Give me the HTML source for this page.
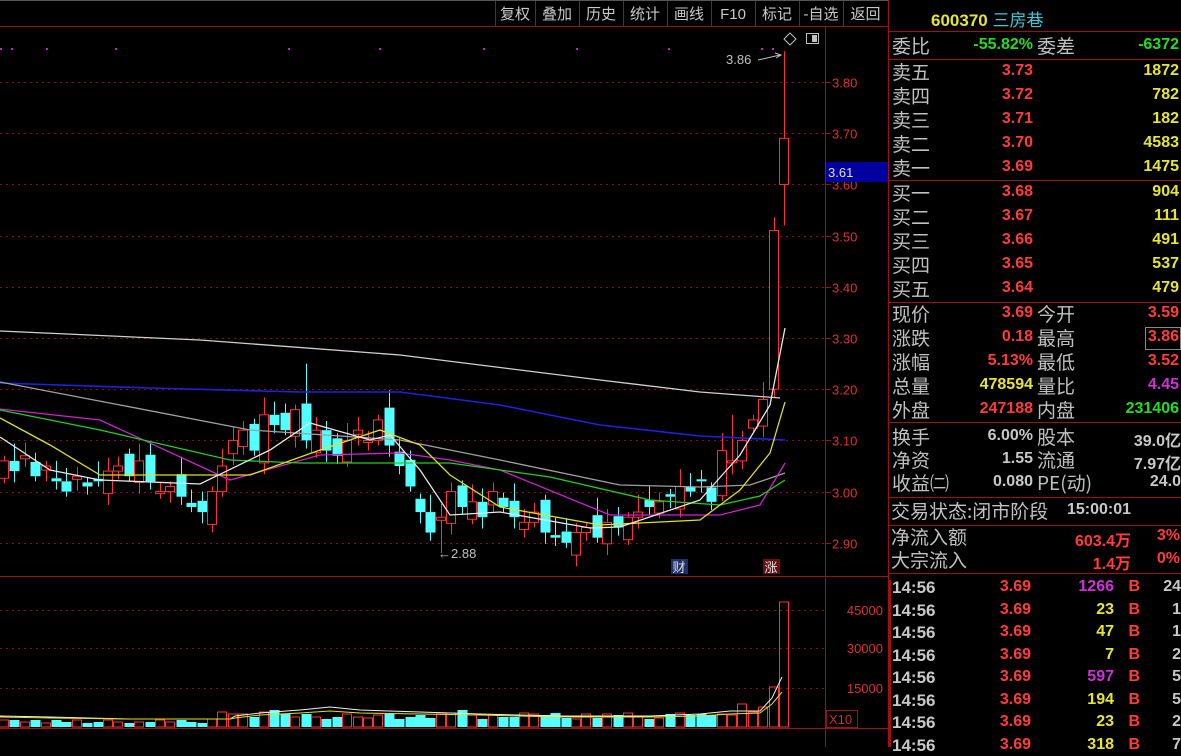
<!DOCTYPE html>
<html><head><meta charset="utf-8">
<style>
body{margin:0;background:#000;width:1181px;height:747px;overflow:hidden;position:relative;font-family:"Liberation Sans","Noto Sans CJK SC",sans-serif;}
.t{position:absolute;white-space:nowrap;}
.lb{font-size:19px;color:#c0c0c0;font-family:"Noto Sans CJK SC","WenQuanYi Zen Hei",sans-serif;}
.n{font-size:16px;font-weight:bold;text-align:right;}
.r{color:#ff3b3b}.y{color:#e6e62e}.g{color:#22dd22}.w{color:#c8c8c8}.m{color:#d030d8}.c{color:#40d0e0}
.hl{position:absolute;left:888px;width:293px;height:1px;background:#a01010;}
</style></head><body>
<svg id="s" width="1181" height="747" style="position:absolute;left:0;top:0"></svg>
<div class="t" style="left:931px;top:6px;font-size:17px;font-weight:bold;color:#e6e62e">600370 <span style="color:#40c8d8;font-weight:normal;font-family:'Noto Sans CJK SC',sans-serif">三房巷</span></div>
<div id="p"></div>
<script>
var S='',NS=document.getElementById('s');
function L(x1,y1,x2,y2,c,d){S+='<line x1="'+x1+'" y1="'+y1+'" x2="'+x2+'" y2="'+y2+'" stroke="'+c+'" stroke-width="1"'+(d?' stroke-dasharray="'+d+'"':'')+'/>';}
function R(x,y,w,h,f,st){S+='<rect x="'+x+'" y="'+y+'" width="'+w+'" height="'+h+'" fill="'+f+'"'+(st?' stroke="'+st+'"':'')+'/>';}
function T(x,y,s,c,fs,a){S+='<text x="'+x+'" y="'+y+'" fill="'+c+'" font-size="'+(fs||13)+'" font-family="Liberation Sans,Noto Sans CJK SC,sans-serif"'+(a?' text-anchor="'+a+'"':'')+'>'+s+'</text>';}
L(0,0.5,888,0.5,'#555');
var bx=[495,535,579,623,667,711,755,799,843,888],bt=['复权','叠加','历史','统计','画线','F10','标记','-自选','返回'];
for(var i=0;i<bx.length;i++){L(bx[i]+.5,1,bx[i]+.5,26,'#a01010');}
for(i=0;i<bt.length;i++)T((bx[i]+bx[i+1])/2,19,bt[i],'#c8c8c8',15,'middle');
L(0,26.5,888,26.5,'#a01010');
L(825.5,26,825.5,747,'#a01010');L(888.5,0,888.5,747,'#a01010');
L(0,576.5,888,576.5,'#a01010');L(0,728.5,888,728.5,'#a01010');
function py(p){return 82+(3.80-p)*512;}
var gl=[3.8,3.7,3.6,3.5,3.4,3.3,3.2,3.1,3.0,2.9];
gl.forEach(function(p){var y=Math.round(py(p))+.5;L(0,y,825,y,'#8a1010','2,4');L(825,y,831,y,'#a01010');T(832,y+5,p.toFixed(2),'#e03030',13);});
[[610,'45000'],[648,'30000'],[688,'15000']].forEach(function(a){L(0,a[0]+.5,825,a[0]+.5,'#8a1010','2,4');T(883,a[0]+5,a[1],'#e03030',13,'end');});
[0,11,46,115,288,379,483,576,668,761,772].forEach(function(x){R(x,48,2,2,'#d020d0');});
var cl=[3.06,3.04,3.07,3.03,3.05,3.02,3.00,3.03,3.01,3.02,3.04,3.05,3.03,3.06,3.02,3.00,3.01,2.99,2.97,2.96,3.00,3.05,3.10,3.12,3.08,3.15,3.13,3.12,3.16,3.10,3.12,3.08,3.07,3.10,3.12,3.10,3.14,3.09,3.05,3.01,2.96,2.92,2.95,3.00,2.97,2.98,2.95,3.00,2.97,2.95,2.94,2.96,2.92,2.91,2.90,2.92,2.93,2.91,2.94,2.93,2.95,2.96,2.97,2.98,2.99,3.01,3.00,3.02,2.98,3.08,3.06,3.10,3.14,3.18,3.51,3.69];
var vol=[7,7,5,7,4,7,5,7,4,5,7,5,4,5,5,7,5,7,5,4,8,15,13,13,10,15,17,13,10,13,10,8,10,13,10,9,12,13,8,10,12,9,13,14,17,12,8,12,10,10,14,13,12,14,9,8,13,9,13,12,14,10,8,9,13,14,12,13,12,13,12,23,15,20,40,125];
for(i=0;i<cl.length;i++){
 var x=Math.round(4+i*10.4),c=cl[i],o;
 if(i==74)o=3.20;else if(i==75)o=3.60;else o=(i?cl[i-1]:3.05)+((i*7%5)-2)*0.012;
 if(Math.abs(o-c)<0.004)o=c+0.005;
 var up=c>o,hi=Math.max(o,c)+0.01+((i*3)%4)*0.008,lo=Math.min(o,c)-0.01-((i*5)%3)*0.006;
 if(i==75){hi=3.86;lo=3.52;} if(i==42)lo=2.88; if(i==29)hi=3.25; if(i==70)hi=3.15;
 var col=up?'#ff3232':'#54ffff',yt=py(Math.max(o,c)),yb=py(Math.min(o,c));
 L(x+.5,py(hi),x+.5,yt,col);L(x+.5,yb,x+.5,py(lo),col);
 if(up)R(x-4.5,yt,9,Math.max(yb-yt,1),'#000',col);else R(x-4.5,yt,10,Math.max(yb-yt,1),col);
 var vh=vol[i];if(up)R(x-4.5,727-vh,9,vh,'none',col);else R(x-4.5,727-vh,10,vh,col);
}
function P(pts,c,w){S+='<polyline fill="none" stroke="'+c+'" stroke-width="'+(w||1.3)+'" points="'+pts+'"/>';}
P('0,331 200,340 400,355 600,380 700,392 780,398','#d0d0d0');
P('0,383 150,388 300,392 400,392 500,405 600,425 700,436 785,440','#2020e0',1.6);
P('0,382 120,405 250,430 400,440 500,460 620,485 700,487 750,485 785,473','#a0a0a0');
P('0,409 100,420 230,480 320,455 400,453 450,460 500,470 610,515 720,515 760,505 785,463','#d020d0');
P('0,410 100,430 230,460 300,463 450,463 550,477 650,500 720,505 760,496 785,480','#20d020');
P('0,418 50,445 100,475 250,475 320,450 380,430 420,445 450,475 500,507 600,525 700,520 740,490 770,453 785,402','#e0e020');
P('0,437 50,470 100,480 200,484 270,450 310,423 370,440 390,435 420,470 450,515 500,512 590,528 620,527 700,500 740,455 770,405 785,328','#e8e8e8');
P('0,716 50,717 130,719 230,719 235,716 260,713 300,710 330,707 360,710 420,712 480,714 560,716 650,716 700,714 730,711 760,711 772,698 782,677','#f0f0f0',1);
P('0,717 50,718 130,719 230,719 235,718 260,715 300,713 330,711 360,713 420,714 480,715 560,717 650,717 700,716 730,714 760,713 772,704 782,692','#e0e020',1);
T(438,558,'←2.88','#c0c0c0',13);T(726,64,'3.86','#c0c0c0',13);
S+='<path d="M758 60 L780 55" stroke="#c0c0c0" fill="none"/><path d="M775 53 L781 55 L776 58" stroke="#c0c0c0" fill="none"/>';
S+='<path d="M790 33 L796 39 L790 45 L784 39 Z" stroke="#c0c0c0" fill="none"/>';
R(806.5,33.5,12,10,'none','#c0c0c0');R(812,35,5,7,'#c0c0c0');
R(671,559,17,15,'#20306a');T(679,572,'财','#e0e0e0',13,'middle');
R(763,559,17,15,'#6a1010');T(771,572,'涨','#e0e0e0',13,'middle');
R(826,162,62,20,'#0000a0');T(828,177,'3.61','#e0e0e0',13);
R(826.5,710.5,31,17,'none','#a01010');T(829,724,'X10','#c03030',13);
NS.innerHTML=S;
var H='';
function lb(x,y,s){H+='<div class="t lb" style="left:'+x+'px;top:'+(y-14)+'px">'+s+'</div>';}
function nv(r,y,s,c){H+='<div class="t n '+c+'" style="right:'+(1181-r)+'px;top:'+(y-10)+'px">'+s+'</div>';}
[31,59,180,302,422,497,525,573].forEach(function(y){H+='<div class="hl" style="top:'+y+'px"></div>';});
lb(892,46,'委比');nv(1033,46,'-55.82%','g');lb(1037,46,'委差');nv(1179,46,'-6372','g');
var sell=[['卖五','3.73','1872'],['卖四','3.72','782'],['卖三','3.71','182'],['卖二','3.70','4583'],['卖一','3.69','1475']];
sell.forEach(function(a,k){var y=72+k*24;lb(892,y,a[0]);nv(1033,y,a[1],'r');nv(1179,y,a[2],'y');});
var buy=[['买一','3.68','904'],['买二','3.67','111'],['买三','3.66','491'],['买四','3.65','537'],['买五','3.64','479']];
buy.forEach(function(a,k){var y=193+k*24;lb(892,y,a[0]);nv(1033,y,a[1],'r');nv(1179,y,a[2],'y');});
var q=[['现价','3.69','r','今开','3.59','r'],['涨跌','0.18','r','最高','3.86','r'],['涨幅','5.13%','r','最低','3.52','r'],['总量','478594','y','量比','4.45','m'],['外盘','247188','r','内盘','231406','g']];
q.forEach(function(a,k){var y=314+k*24;lb(892,y,a[0]);nv(1033,y,a[1],a[2]);lb(1037,y,a[3]);nv(1179,y,a[4],a[5]);});
H+='<div style="position:absolute;left:1145px;top:327px;width:34px;height:21px;border:1px solid #888"></div>';
var f=[['换手','6.00%','股本','39.0亿'],['净资','1.55','流通','7.97亿'],['收益㈡','0.080','PE(动)','24.0']];
f.forEach(function(a,k){var y=437+k*23;lb(892,y,a[0]);nv(1033,y,a[1],'w');lb(1037,y,a[2]);nv(1181,y,a[3],'w');});
lb(891,511,'交易状态:闭市阶段');H+='<div class="t n w" style="left:1067px;top:501px">15:00:01</div>';
lb(891,537,'净流入额');nv(1131,537,'603.4万','r');nv(1180,537,'3%','r');
lb(891,560,'大宗流入');nv(1131,560,'1.4万','r');nv(1180,560,'0%','r');
var tk=[['1266','m','24'],['23','y','1'],['47','y','1'],['7','y','2'],['597','m','5'],['194','y','5'],['23','y','2'],['318','y','7']];
tk.forEach(function(a,k){var y=588+k*22.5;H+='<div class="t n w" style="left:892px;top:'+(y-10)+'px;font-size:17px">14:56</div>';nv(1031,y,'3.69','r');nv(1114,y,a[0],a[1]);nv(1140,y,'B','r');nv(1181,y,a[2],'w');});
H+='<div style="position:absolute;left:888px;top:580px;width:3px;height:167px;background:#a01010"></div>';
document.getElementById('p').innerHTML=H;
</script>
</body></html>
